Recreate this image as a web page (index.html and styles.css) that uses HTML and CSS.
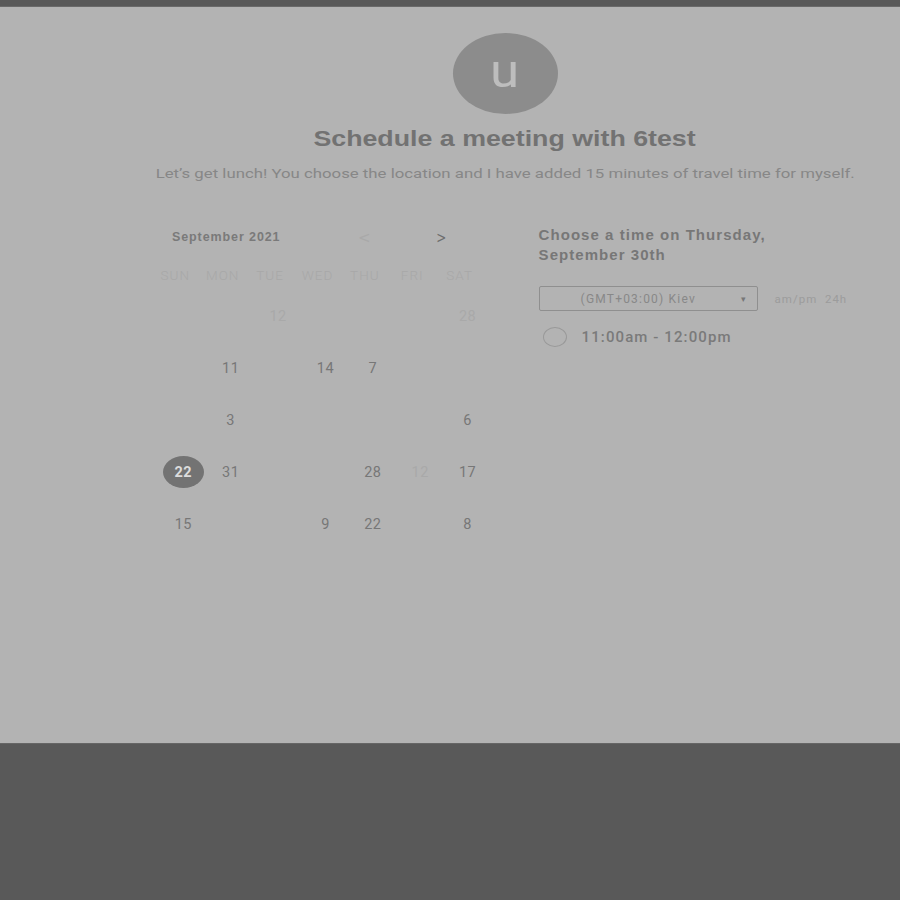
FILE: index.html
```html
<!DOCTYPE html>
<html>
<head>
<meta charset="utf-8">
<link rel="stylesheet" href="styles.css">
</head>
<body>
<div class="topbar"></div>
<div class="main">
  <div class="container">
    <div class="avatar"><span>u</span></div>
    <h1 class="title">Schedule a meeting with 6test</h1>
    <p class="subtitle">Let’s get lunch! You choose the location and I have added 15 minutes of travel time for myself.</p>
    <div class="columns">
      <div class="calendar">
        <div class="month-row">
          <span class="month">September 2021</span>
          <span class="nav prev">&lt;</span>
          <span class="nav next">&gt;</span>
        </div>
        <div class="weekdays">
          <span>SUN</span><span>MON</span><span>TUE</span><span>WED</span><span>THU</span><span>FRI</span><span>SAT</span>
        </div>
        <div class="days">
          <span></span><span></span><span class="faint">12</span><span></span><span></span><span></span><span class="faint">28</span>
          <span></span><span>11</span><span></span><span>14</span><span>7</span><span></span><span></span>
          <span></span><span>3</span><span></span><span></span><span></span><span></span><span>6</span>
          <span><b class="selected">22</b></span><span>31</span><span></span><span></span><span>28</span><span class="faint">12</span><span>17</span>
          <span>15</span><span></span><span></span><span>9</span><span>22</span><span></span><span>8</span>
        </div>
      </div>
      <div class="times">
        <h2 class="choose">Choose a time on Thursday,<br>September 30th</h2>
        <div class="tz-row">
          <div class="select"><span class="tz">(GMT+03:00) Kiev</span><span class="caret">▾</span></div>
          <span class="fmt">am/pm&nbsp;&nbsp;24h</span>
        </div>
        <div class="slot">
          <span class="radio"></span>
          <span class="slot-text">11:00am - 12:00pm</span>
        </div>
      </div>
    </div>
  </div>
</div>
<div class="bottom"></div>
</body>
</html>
```
FILE: styles.css
```css
html, body {
  margin: 0;
  padding: 0;
  background: #595959;
  font-family: Roboto, "Liberation Sans", sans-serif;
}
.topbar {
  height: 7px;
  background: #595959;
  border-bottom: 1px solid #6a6a6a;
  box-sizing: border-box;
}
.main {
  height: 737px;
  background: #b3b3b3;
  border-bottom: 1px solid #666;
  box-sizing: border-box;
}
.bottom {
  height: 156px;
  background: #595959;
}
.container {
  width: 700px;
  margin-left: 155px;
  padding-top: 26px;
  display: flex;
  flex-direction: column;
  align-items: center;
}
.avatar {
  width: 105px;
  height: 81px;
  border-radius: 50%;
  background: #8c8c8c;
  display: flex;
  align-items: center;
  justify-content: center;
}
.avatar span {
  color: #bdbdbd;
  font-family: Roboto, sans-serif;
  font-size: 46px;
  line-height: 46px;
  margin-top: -6px;
  transform: scaleX(1.15);
}
.title {
  margin: 12px 0 0;
  font-family: "Liberation Sans", Arial, sans-serif;
  font-weight: bold;
  font-size: 21.5px;
  line-height: 26px;
  color: #727272;
  transform: scaleX(1.245);
}
.subtitle {
  margin: 12px 0 0;
  font-family: Roboto, sans-serif;
  font-weight: 400;
  font-size: 13.5px;
  line-height: 18px;
  color: #878787;
  white-space: nowrap;
  transform: scaleX(1.243);
}
.columns {
  align-self: stretch;
  display: flex;
  margin-top: 43px;
}
.calendar {
  width: 332px;
  margin-left: 4.6px;
}
.month-row {
  display: flex;
  align-items: center;
  height: 26px;
}
.month {
  font-family: "Liberation Sans", Arial, sans-serif;
  font-weight: bold;
  font-size: 12.5px;
  letter-spacing: 0.9px;
  color: #7a7a7a;
  margin-left: 12.4px;
  width: 186px;
  position: relative;
  top: -1px;
}
.nav {
  font-family: "DejaVu Sans", sans-serif;
  font-size: 15px;
  line-height: 20px;
}
.prev {
  color: #a9a9a9;
  margin-left: 0;
}
.next {
  color: #6e6e6e;
  margin-left: 64px;
  transform: scaleX(0.8);
}
.weekdays {
  display: grid;
  grid-template-columns: repeat(7, 47.4px);
  height: 24px;
  margin-top: 12px;
  margin-left: -8px;
  align-items: center;
}
.weekdays span {
  text-align: center;
  font-size: 13.5px;
  font-weight: 300;
  letter-spacing: 1px;
  color: #a8a8a8;
}
.days {
  display: grid;
  grid-template-columns: repeat(7, 47.4px);
  grid-auto-rows: 52px;
  margin-top: 3px;
}
.days span {
  display: flex;
  align-items: center;
  justify-content: center;
  font-size: 14.5px;
  letter-spacing: 0.5px;
  color: #777;
}
.days span.faint {
  color: #a9a9a9;
}
.selected {
  width: 41px;
  height: 32px;
  border-radius: 50%;
  background: #737373;
  color: #dcdcdc;
  display: flex;
  align-items: center;
  justify-content: center;
  font-size: 14.5px;
}
.times {
  margin-left: 47px;
  display: flex;
  flex-direction: column;
}
.choose {
  margin: 0;
  font-family: "Liberation Sans", Arial, sans-serif;
  font-weight: bold;
  font-size: 15px;
  line-height: 20px;
  letter-spacing: 1.05px;
  color: #777;
}
.tz-row {
  display: flex;
  align-items: center;
  margin-top: 21px;
}
.select {
  width: 219px;
  height: 25px;
  box-sizing: border-box;
  border: 1px solid #8f8f8f;
  border-radius: 2px;
  display: flex;
  align-items: center;
  position: relative;
}
.tz {
  margin-left: 41px;
  font-size: 12px;
  letter-spacing: 1.2px;
  color: #888;
}
.caret {
  margin-left: auto;
  margin-right: 11px;
  font-size: 9px;
  color: #777;
}
.fmt {
  margin-left: 17px;
  font-size: 11.5px;
  letter-spacing: 1px;
  color: #9c9c9c;
}
.slot {
  display: flex;
  align-items: center;
  margin-top: 16px;
  height: 20px;
}
.radio {
  width: 24px;
  height: 20px;
  box-sizing: border-box;
  border: 1px solid #999;
  border-radius: 50%;
  margin-left: 4px;
}
.slot-text {
  margin-left: 15px;
  font-family: Roboto, sans-serif;
  font-size: 15px;
  font-weight: 500;
  color: #7a7a7a;
  letter-spacing: 1.1px;
}
```
